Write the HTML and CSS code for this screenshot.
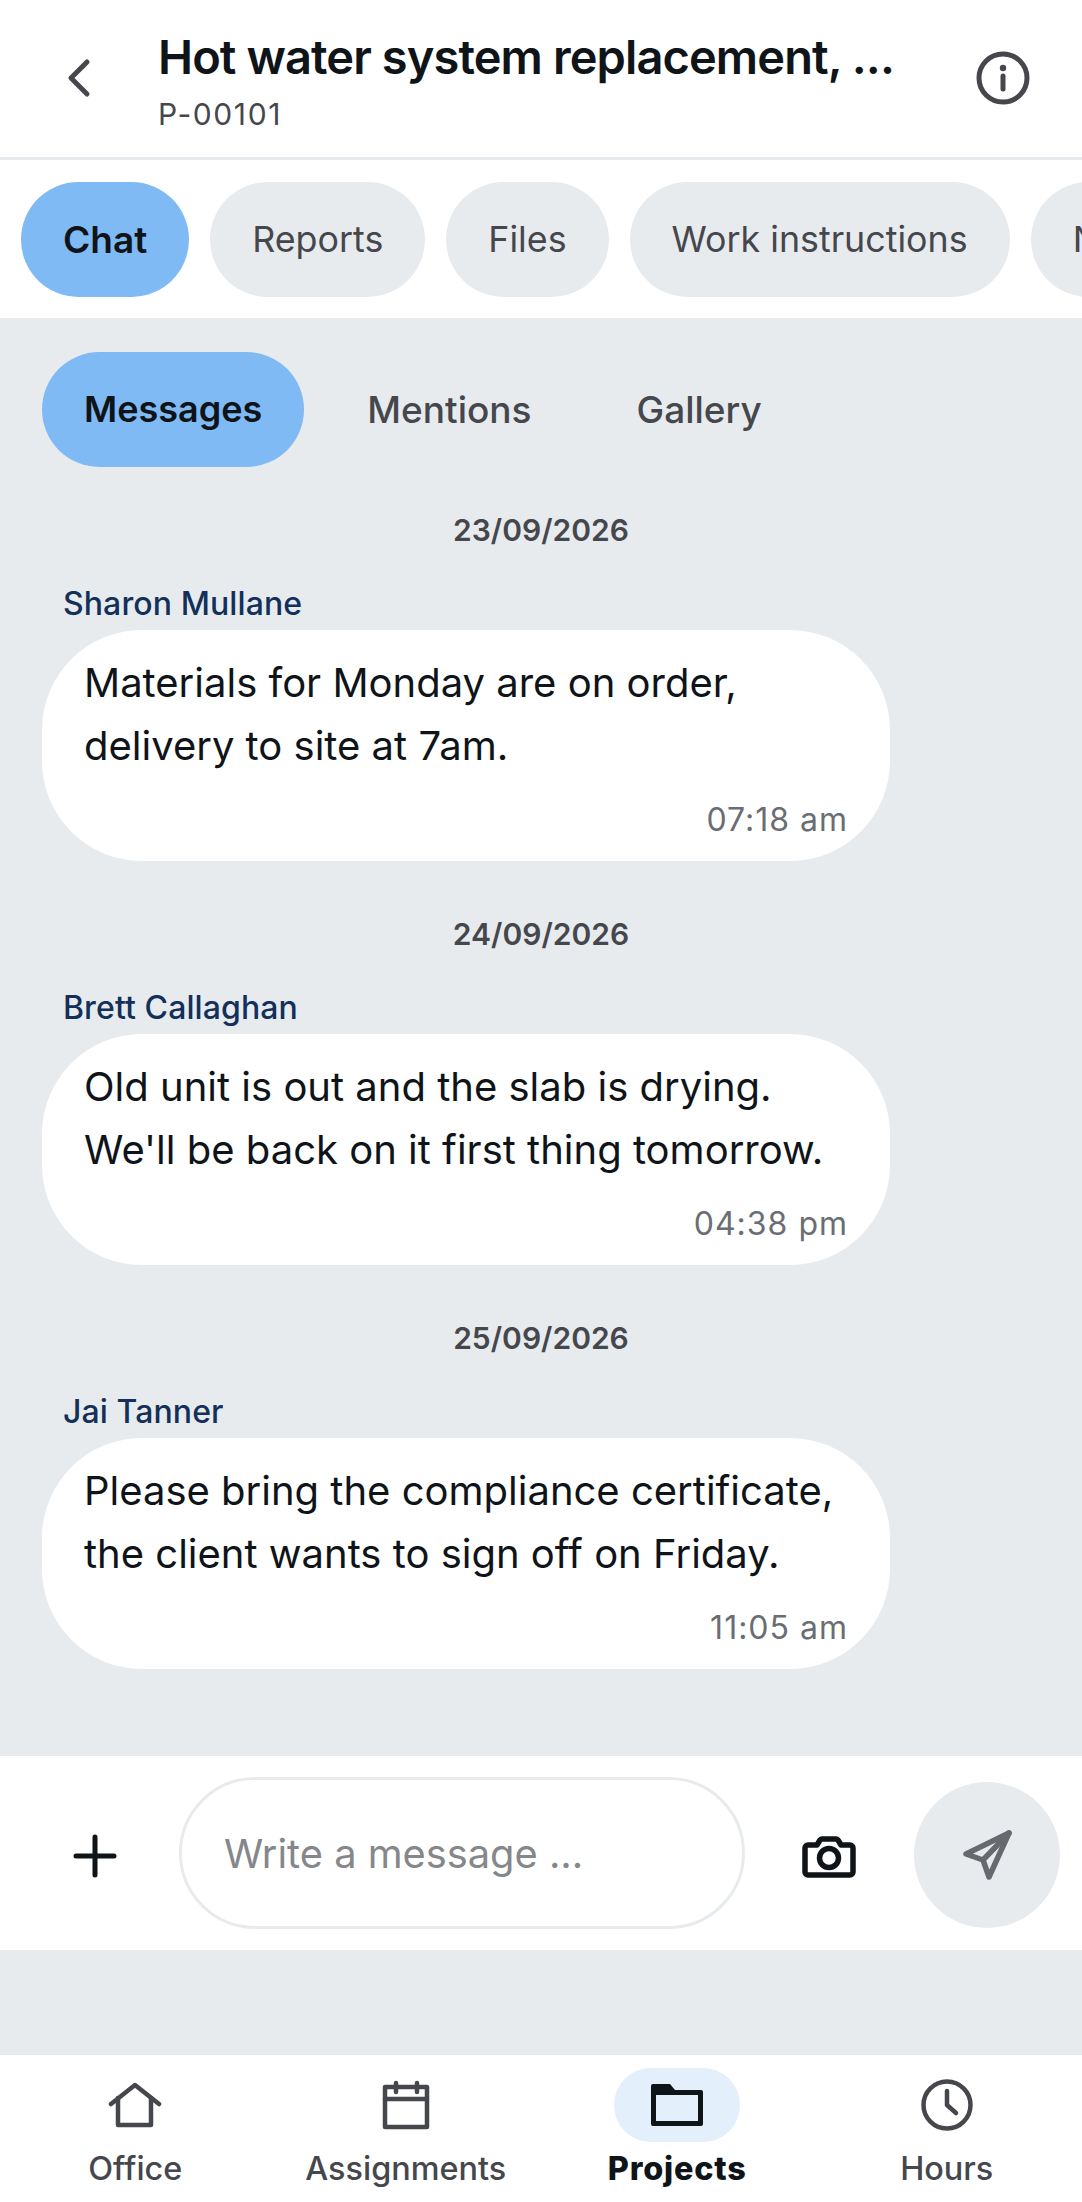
FILE: index.html
```html
<!DOCTYPE html>
<html lang="en">
<head>
  <meta charset="UTF-8">
  <meta name="viewport" content="width=device-width, initial-scale=1.0">
  <title>Project chat</title>
  <link rel="stylesheet" href="styles.css">
</head>
<body>
  <div class="app">
    <header class="topbar">
      <svg class="back" width="24" height="40" viewBox="0 0 24 40"><path d="M20 4 4 20l16 16" /></svg>
      <div class="topbar-text">
        <div class="title">Hot water system replacement, ...</div>
        <div class="code">P-00101</div>
      </div>
      <svg class="info" width="54" height="54" viewBox="0 0 54 54"><circle cx="27" cy="27" r="24" /><path d="M27 25v13" /><circle class="dot" cx="27" cy="17" r="3.2" /></svg>
    </header>

    <nav class="chips">
      <a class="chip active">Chat</a>
      <a class="chip">Reports</a>
      <a class="chip">Files</a>
      <a class="chip">Work instructions</a>
      <a class="chip">Notes</a>
    </nav>

    <main class="chat">
      <div class="subtabs">
        <a class="subtab active">Messages</a>
        <a class="subtab">Mentions</a>
        <a class="subtab">Gallery</a>
      </div>

      <section class="day">
        <div class="date">23/09/2026</div>
        <div class="sender">Sharon Mullane</div>
        <div class="bubble">
          <p>Materials for Monday are on order,<br>delivery to site at 7am.</p>
          <div class="time">07:18 am</div>
        </div>
      </section>

      <section class="day">
        <div class="date">24/09/2026</div>
        <div class="sender">Brett Callaghan</div>
        <div class="bubble">
          <p>Old unit is out and the slab is drying.<br>We'll be back on it first thing tomorrow.</p>
          <div class="time">04:38 pm</div>
        </div>
      </section>

      <section class="day">
        <div class="date">25/09/2026</div>
        <div class="sender">Jai Tanner</div>
        <div class="bubble">
          <p>Please bring the compliance certificate,<br>the client wants to sign off on Friday.</p>
          <div class="time">11:05 am</div>
        </div>
      </section>
    </main>

    <div class="composer">
      <svg class="plus" width="44" height="44" viewBox="0 0 44 44"><path d="M22 3v38M3 22h38" /></svg>
      <div class="input">Write a message ...</div>
      <svg class="camera" width="54" height="42" viewBox="0 0 54 42"><path d="M6 9h9l3-5a3 3 0 0 1 2-1h14a3 3 0 0 1 2 1l3 5h9a3 3 0 0 1 3 3v24a3 3 0 0 1-3 3H6a3 3 0 0 1-3-3V12a3 3 0 0 1 3-3z" /><circle cx="27" cy="22" r="9.5" /></svg>
      <div class="send">
        <svg width="50" height="50" viewBox="0 0 50 50"><path d="M47 3 4 24l17 6 6 17z" /><path d="M47 3 21 30" /></svg>
      </div>
    </div>

    <div class="gap"></div>

    <footer class="tabbar">
      <a class="tab">
        <span class="tab-icon"><svg width="54" height="46" viewBox="0 0 54 46"><path d="M3 22 27 3l24 19" /><path d="M10 16v27h33V16" /></svg></span>
        Office
      </a>
      <a class="tab">
        <span class="tab-icon"><svg width="48" height="50" viewBox="0 0 48 50"><rect x="3" y="7" width="42" height="40" /><path d="M3 19h42M14 3v9M35 3v9" /></svg></span>
        Assignments
      </a>
      <a class="tab active">
        <span class="tab-icon"><svg width="54" height="44" viewBox="0 0 54 44"><path class="fill" d="M1 3a2 2 0 0 1 2-2h17l5 6h26a2 2 0 0 1 2 2v32a2 2 0 0 1-2 2H3a2 2 0 0 1-2-2z" /><rect class="hole" x="6" y="12" width="42" height="26" /></svg></span>
        Projects
      </a>
      <a class="tab">
        <span class="tab-icon"><svg width="54" height="54" viewBox="0 0 54 54"><circle cx="27" cy="27" r="23.5" /><path d="M27 13v14l9 8" /></svg></span>
        Hours
      </a>
    </footer>
  </div>
</body>
</html>
```

FILE: styles.css
```css
* {
  box-sizing: border-box;
}
body {
  margin: 0;
  font-family: Inter, sans-serif;
  color: #0f1419;
  background: #e8ebee;
}
p {
  margin: 0;
}
svg {
  display: block;
  flex: none;
  fill: none;
  stroke: currentColor;
  stroke-linecap: round;
  stroke-linejoin: round;
}
.app {
  width: 1082px;
  height: 2202px;
  display: flex;
  flex-direction: column;
  overflow: hidden;
}

/* header */
.topbar {
  height: 160px;
  flex: none;
  display: flex;
  align-items: center;
  padding: 0 52px 1px 67px;
  background: #fff;
  border-bottom: 3px solid #e8ebee;
}
.back {
  color: #45474d;
  stroke-width: 5;
}
.topbar-text {
  flex: 1;
  margin-left: 67px;
  padding-top: 4px;
}
.title {
  font-size: 47px;
  line-height: 56px;
  font-weight: 600;
  letter-spacing: -0.9px;
  white-space: nowrap;
}
.code {
  margin-top: 11px;
  font-size: 30px;
  line-height: 36px;
  color: #45474d;
  letter-spacing: 1.6px;
}
.info {
  color: #45474d;
  stroke-width: 5;
}
.info .dot {
  fill: currentColor;
  stroke: none;
}

/* project sections */
.chips {
  height: 158px;
  flex: none;
  display: flex;
  align-items: center;
  gap: 21px;
  padding: 0 0 0 21px;
  background: #fff;
  overflow: hidden;
}
.chip {
  flex: none;
  height: 115px;
  line-height: 115px;
  padding: 0 42px;
  border-radius: 58px;
  background: #e8ebee;
  color: #45474d;
  font-size: 35.8px;
}
.chip.active {
  background: #7fbaf5;
  color: #0f1419;
  font-size: 37px;
  font-weight: 600;
}

/* chat */
.chat {
  flex: none;
  height: 1438px;
  padding: 34px 42px 0;
}
.subtabs {
  display: flex;
  margin-bottom: 45px;
}
.subtab {
  height: 115px;
  line-height: 115px;
  padding: 0 42px;
  margin-right: 21px;
  border-radius: 58px;
  color: #45474d;
  font-size: 37px;
  font-weight: 500;
}
.subtab.active {
  background: #7fbaf5;
  color: #0f1419;
  font-size: 36px;
  font-weight: 600;
}
.day {
  margin-bottom: 55px;
}
.date {
  text-align: center;
  font-size: 30px;
  line-height: 36px;
  font-weight: 600;
  color: #45474d;
}
.sender {
  margin: 38px 0 8px 21px;
  font-size: 32px;
  line-height: 36px;
  font-weight: 500;
  letter-spacing: 0.1px;
  color: #12305a;
}
.bubble {
  width: 848px;
  height: 231px;
  padding: 21px 42px 0;
  border-radius: 100px;
  background: #fff;
}
.bubble p {
  font-size: 40px;
  line-height: 63px;
}
.time {
  margin-top: 25px;
  text-align: right;
  font-size: 32px;
  line-height: 36px;
  letter-spacing: 1px;
  color: #6a6d73;
}

/* message input */
.composer {
  height: 194px;
  flex: none;
  display: flex;
  align-items: center;
  padding: 0 22px 0 73px;
  background: #fff;
}
.plus {
  margin-top: 6px;
  color: #0f1419;
  stroke-width: 5;
}
.input {
  width: 567px;
  height: 152px;
  line-height: 148px;
  margin-left: 62px;
  padding-left: 42px;
  border: 3px solid #e8ebee;
  border-radius: 76px;
  font-size: 39.8px;
  color: #85878a;
}
.camera {
  margin: 8px 0 0 57px;
  color: #0f1419;
  stroke-width: 5.5;
}
.send {
  width: 146px;
  height: 146px;
  margin: 4px 0 0 58px;
  border-radius: 50%;
  background: #e8ebee;
  display: flex;
  align-items: center;
  justify-content: center;
  color: #66696e;
}
.send svg {
  stroke-width: 5.5;
}

.gap {
  flex: 1;
}

/* bottom nav */
.tabbar {
  height: 147px;
  flex: none;
  display: grid;
  grid-template-columns: repeat(4, 1fr);
  background: #fff;
}
.tab {
  display: flex;
  flex-direction: column;
  align-items: center;
  padding-top: 13px;
  color: #45474d;
  font-size: 32.4px;
  line-height: 36px;
  font-weight: 500;
}
.tab-icon {
  width: 126px;
  height: 74px;
  margin-bottom: 9px;
  border-radius: 37px;
  display: flex;
  align-items: center;
  justify-content: center;
}
.tab svg {
  stroke-width: 4.5;
}
.tab.active {
  padding-left: 2px;
  color: #0f1419;
  font-weight: 800;
  letter-spacing: 0.8px;
}
.tab.active .tab-icon {
  background: #e3effb;
}
.tab.active .fill {
  fill: currentColor;
  stroke: none;
}
.tab.active .hole {
  fill: #e3effb;
  stroke: none;
}
```
